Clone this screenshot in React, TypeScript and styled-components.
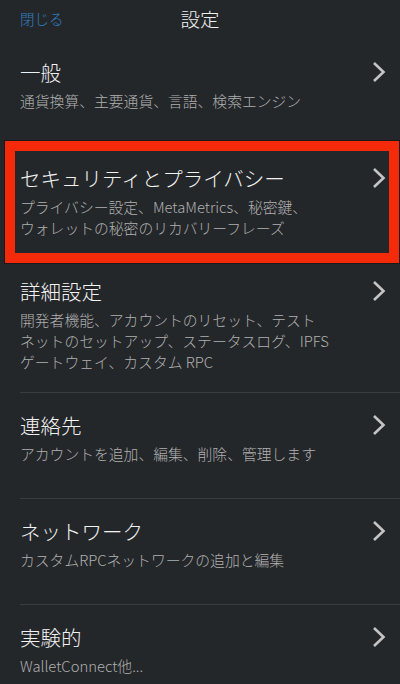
import React from "react";
import styled, { createGlobalStyle } from "styled-components";

type Item = {
  title: string;
  lines: string[];
  highlighted?: boolean;
};

const items: Item[] = [
  { title: "一般", lines: ["通貨換算、主要通貨、言語、検索エンジン"] },
  {
    title: "セキュリティとプライバシー",
    lines: [
      "プライバシー設定、MetaMetrics、秘密鍵、",
      "ウォレットの秘密のリカバリーフレーズ",
    ],
    highlighted: true,
  },
  {
    title: "詳細設定",
    lines: [
      "開発者機能、アカウントのリセット、テスト",
      "ネットのセットアップ、ステータスログ、IPFS",
      "ゲートウェイ、カスタム RPC",
    ],
  },
  { title: "連絡先", lines: ["アカウントを追加、編集、削除、管理します"] },
  { title: "ネットワーク", lines: ["カスタムRPCネットワークの追加と編集"] },
  { title: "実験的", lines: ["WalletConnect他..."] },
];

const GlobalStyle = createGlobalStyle`
  html, body {
    margin: 0;
    padding: 0;
    background: #24272a;
  }
  body {
    font-family: "Noto Sans CJK JP", "Noto Sans", sans-serif;
    font-weight: 300;
    -webkit-font-smoothing: antialiased;
  }
`;

const Screen = styled.div`
  width: 400px;
  height: 684px;
  overflow: hidden;
  background: #24272a;
`;

const Header = styled.header`
  height: 40px;
  display: grid;
  grid-template-columns: 1fr auto 1fr;
  align-items: center;
  padding: 0 20px;
  box-sizing: border-box;
`;

const CloseButton = styled.button`
  justify-self: start;
  background: none;
  border: none;
  padding: 0;
  font-family: inherit;
  font-weight: 300;
  font-size: 14.5px;
  color: #2f7fc1;
  margin-top: -4px;
  cursor: pointer;
`;

const Title = styled.h1`
  margin: -4px 0 0;
  font-size: 19.5px;
  font-weight: 300;
  color: #eeeeee;
`;

const List = styled.div`
  display: flex;
  flex-direction: column;
`;

const Row = styled.div<{ $highlighted?: boolean }>`
  position: relative;
  display: flex;
  align-items: flex-start;
  margin-left: 20px;
  padding: 20px 14px 20px 0;
  min-height: 106px;
  box-sizing: border-box;
  border-bottom: 1px solid #3a3d40;

  ${(p) =>
    p.$highlighted &&
    `
    &::after {
      content: "";
      position: absolute;
      top: -5px;
      bottom: -5px;
      left: -15px;
      right: 1px;
      border: 10px solid #f52a0a;
      box-shadow: 0 0 0 1px rgba(0, 0, 0, 0.35);
      pointer-events: none;
    }
  `}
`;

const Texts = styled.div`
  flex: 1;
  display: flex;
  flex-direction: column;
`;

const ItemTitle = styled.div`
  font-size: 20.5px;
  line-height: 24px;
  color: #f2f2f2;
  margin-bottom: 6px;
`;

const ItemLine = styled.div`
  font-size: 14.8px;
  line-height: 21px;
  color: #b0b0b0;
  white-space: nowrap;
`;

const ChevronBox = styled.span`
  height: 24px;
  display: flex;
  align-items: center;
  color: #c4c4c4;
`;

const Chevron = () => (
  <svg width="14" height="22" viewBox="0 0 14 22" fill="none">
    <polyline
      points="2,2 11.5,11 2,20"
      stroke="currentColor"
      strokeWidth="2.6"
      strokeLinecap="butt"
      strokeLinejoin="miter"
    />
  </svg>
);

const App = () => (
  <>
    <GlobalStyle />
    <Screen>
      <Header>
        <CloseButton>閉じる</CloseButton>
        <Title>設定</Title>
        <span />
      </Header>
      <List>
        {items.map((item) => (
          <Row key={item.title} $highlighted={item.highlighted}>
            <Texts>
              <ItemTitle>{item.title}</ItemTitle>
              {item.lines.map((line) => (
                <ItemLine key={line}>{line}</ItemLine>
              ))}
            </Texts>
            <ChevronBox>
              <Chevron />
            </ChevronBox>
          </Row>
        ))}
      </List>
    </Screen>
  </>
);

export default App;
